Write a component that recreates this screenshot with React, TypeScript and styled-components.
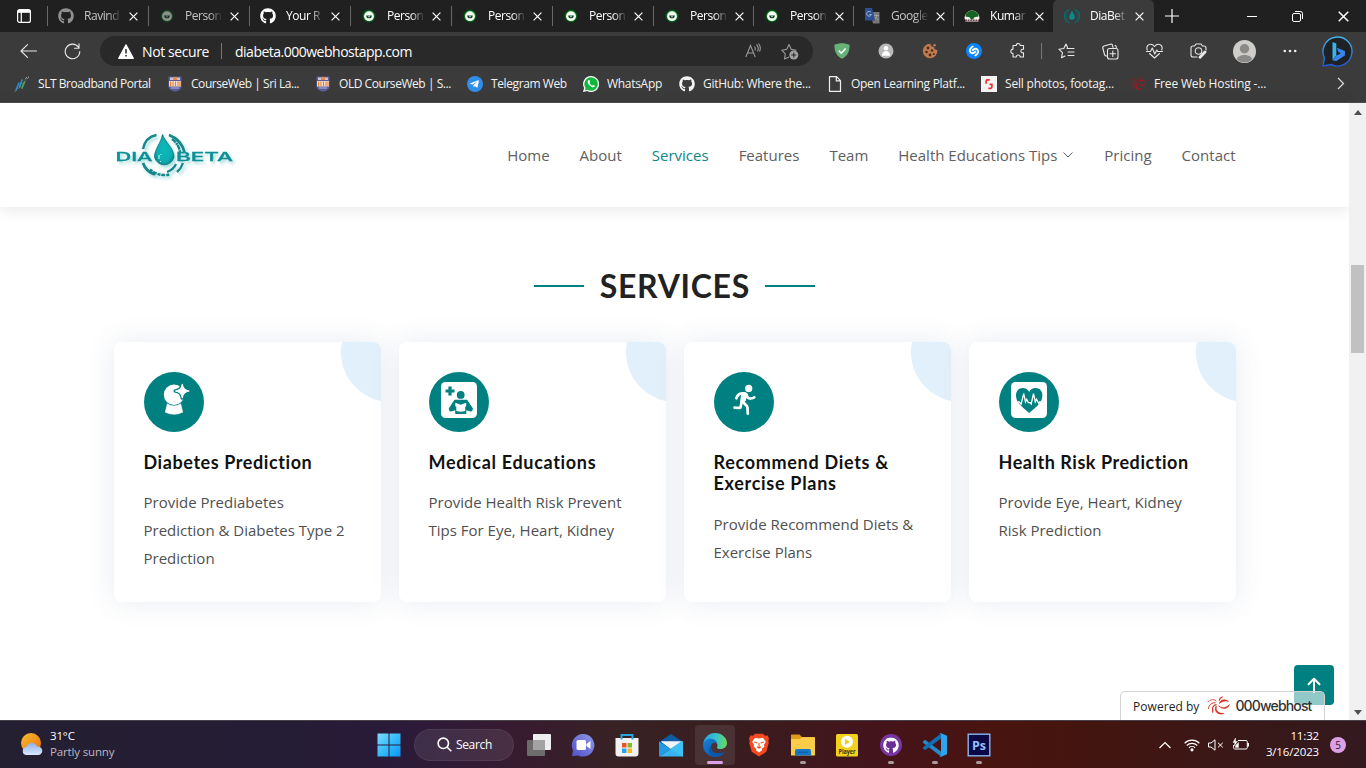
import React from "react";
import styled, { createGlobalStyle } from "styled-components";
import { FaGithub, FaTelegramPlane } from "react-icons/fa";
import { SiShazam } from "react-icons/si";

const ui = `"Open Sans", "Noto Sans", sans-serif`;
const teal = "#008080";

const GlobalStyle = createGlobalStyle`
  * { box-sizing: border-box; }
  body { margin: 0; background: #fff; overflow: hidden; font-family: ${ui}; }
  svg { display: block; flex: none; }
  h2, h4, p { margin: 0; }
`;

const Screen = styled.div`
  width: 1366px;
  height: 768px;
  display: flex;
  flex-direction: column;
  overflow: hidden;
`;

/* ---------- Browser: tab strip ---------- */

const TabStrip = styled.div`
  display: flex;
  height: 32px;
  flex: none;
  background: #202020;
  color: #fff;
`;

const WorkspaceButton = styled.div`
  width: 47px;
  padding: 9px 0 0 17px;
`;

const Tab = styled.div<{ $w: number; $active?: boolean; $dim?: boolean }>`
  width: ${(p) => p.$w}px;
  height: 32px;
  display: flex;
  align-items: center;
  padding-left: 11px;
  position: relative;
  border-radius: 5px 5px 0 0;
  background: ${(p) => (p.$active ? "#3b3b3b" : "transparent")};
  &::before {
    content: "";
    position: absolute;
    left: 0;
    top: 6px;
    width: 1px;
    height: 20px;
    background: ${(p) => (p.$active ? "transparent" : "#686868")};
  }
  > svg:first-child { opacity: ${(p) => (p.$dim ? 0.5 : 1)}; }
`;

const TabTitle = styled.span<{ $dim?: boolean }>`
  width: 37px;
  margin-left: 10px;
  white-space: nowrap;
  font-size: 12px;
  line-height: 18px;
  letter-spacing: -0.45px;
  color: ${(p) => (p.$dim ? "#c4c4c4" : "#fff")};
  -webkit-mask-image: linear-gradient(90deg, #000 65%, transparent 102%);
  mask-image: linear-gradient(90deg, #000 65%, transparent 102%);
`;

const TabClose = styled.span`
  margin-left: 8px;
`;

const WindowButtons = styled.div`
  flex: 1;
  display: flex;
  justify-content: space-between;
  align-items: center;
  padding: 0 17px 0 11px;
`;

const CaptionButtons = styled.div`
  display: flex;
  gap: 35px;
  align-items: center;
`;

/* ---------- Browser: toolbar ---------- */

const Toolbar = styled.div`
  display: flex;
  align-items: center;
  height: 38px;
  flex: none;
  background: #3b3b3b;
  color: #eee;
`;

const NavButton = styled.div`
  width: 44px;
  height: 30px;
  display: flex;
  align-items: center;
  justify-content: center;
`;

const NavGroup = styled.div`
  display: flex;
  width: 100px;
  padding-left: 6px;
`;

const AddressBar = styled.div`
  width: 713px;
  height: 30px;
  border-radius: 15px;
  background: #292929;
  display: flex;
  align-items: center;
  padding: 0 14px 0 18px;
  font-size: 14px;
  color: #fff;
`;

const Security = styled.span`
  width: 79px;
  margin-left: 8px;
  letter-spacing: -0.4px;
  white-space: nowrap;
`;

const Url = styled.span`
  flex: 1;
  margin-left: 13px;
  letter-spacing: -0.5px;
`;

const Rule = styled.span`
  width: 1px;
  height: 16px;
  background: #777;
`;

const AddressIcons = styled.div`
  display: flex;
  gap: 20px;
`;

const Extensions = styled.div`
  display: flex;
  align-items: center;
  margin-left: 7px;
`;

const ToolGap = styled.span<{ $w: number }>`
  width: ${(p) => p.$w}px;
`;

const Bookmarks = styled.div`
  height: 33px;
  flex: none;
  display: flex;
  align-items: center;
  padding: 0 0 5px 14px;
  background: #3b3b3b;
  border-bottom: 1px solid #4c4c4c;
  color: #f3f3f3;
  font-size: 12px;
`;

const Bookmark = styled.div<{ $w: number; $track: number }>`
  width: ${(p) => p.$w}px;
  flex: none;
  display: flex;
  align-items: center;
  gap: 8px;
  white-space: nowrap;
  letter-spacing: ${(p) => p.$track}px;
`;

/* ---------- Web page ---------- */

const Viewport = styled.div`
  flex: 1;
  display: flex;
  min-height: 0;
  position: relative;
`;

const Page = styled.div`
  width: 1349px;
  background: #fff;
`;

const SiteHeader = styled.header`
  height: 104px;
  display: flex;
  align-items: center;
  justify-content: space-between;
  padding: 0 113.5px 0 110px;
  background: #fff;
  box-shadow: 0 2px 15px rgba(0, 0, 0, 0.1);
`;

const Menu = styled.nav`
  display: flex;
  gap: 30px;
`;

const MenuItem = styled.a<{ $active?: boolean }>`
  display: flex;
  align-items: center;
  gap: 5px;
  font-size: 15px;
  line-height: 20px;
  white-space: nowrap;
  color: ${(p) => (p.$active ? "#0d8787" : "#606060")};
`;

const Services = styled.section`
  padding: 60px 113.5px 0;
`;

const Heading = styled.div`
  display: flex;
  align-items: center;
  justify-content: center;
  gap: 15px;
  height: 38px;
  margin-bottom: 37px;
  &::before, &::after {
    content: "";
    width: 50px;
    height: 2px;
    background: ${teal};
  }
  h2 {
    width: 151px;
    text-align: center;
    font: 700 32px/38px Lato, sans-serif;
    letter-spacing: 0.7px;
    text-indent: 0.7px;
    color: #222;
    white-space: nowrap;
  }
`;

const CardGrid = styled.div`
  display: grid;
  grid-template-columns: repeat(4, 267px);
  gap: 18px;
`;

const Card = styled.article`
  height: 260px;
  padding: 30px 20px 30px 30px;
  position: relative;
  overflow: hidden;
  border-radius: 8px;
  background: #fff;
  box-shadow: 0 0 29px 0 rgba(68, 88, 144, 0.12);
  &::before {
    content: "";
    position: absolute;
    right: -60px;
    top: -40px;
    width: 100px;
    height: 100px;
    border-radius: 50%;
    background: #e1f0fa;
  }
`;

const CardIcon = styled.div`
  width: 60px;
  height: 60px;
  border-radius: 50%;
  display: flex;
  align-items: center;
  justify-content: center;
  margin-bottom: 19.6px;
  background: ${teal};
  color: #fff;
`;

const CardTitle = styled.h4<{ $track: number }>`
  font: 700 18px/21.6px Lato, sans-serif;
  letter-spacing: ${(p) => p.$track}px;
  margin-bottom: 15px;
  white-space: pre-line;
  color: #111;
`;

const CardText = styled.p`
  font-size: 15px;
  line-height: 28px;
  white-space: pre-line;
  color: #505050;
`;

const Scrollbar = styled.div`
  width: 17px;
  background: #f1f1f1;
  display: flex;
  flex-direction: column;
  align-items: center;
  padding: 7px 0 5px;
`;

const Thumb = styled.div`
  width: 13px;
  height: 88px;
  margin: 150px 0 auto;
  background: #c1c1c1;
`;

const BackToTop = styled.div`
  position: absolute;
  right: 32px;
  bottom: 15px;
  width: 40px;
  height: 40px;
  border-radius: 4px;
  background: ${teal};
  display: flex;
  align-items: center;
  justify-content: center;
`;

const HostBadge = styled.div`
  position: absolute;
  left: 1120px;
  bottom: 0;
  width: 205px;
  height: 29px;
  border: 1px solid #d3d3d3;
  border-bottom: 0;
  border-radius: 5px 5px 0 0;
  background: rgba(255, 255, 255, 0.57);
  display: flex;
  align-items: center;
  padding-left: 12px;
  font-size: 12px;
  letter-spacing: 0.05px;
  color: #222;
  svg { margin: 0 5px 0 8px; }
`;

const HostName = styled.span`
  font: 500 14px/20px Inter, sans-serif;
  letter-spacing: -0.85px;
  color: #333;
`;

/* ---------- Taskbar ---------- */

const Taskbar = styled.footer`
  height: 48px;
  flex: none;
  display: flex;
  align-items: center;
  border-top: 1px solid #48414a;
  background: linear-gradient(90deg, #251f32 0%, #241d35 21%, #2b1a3a 29%, #371b30 38%, #372224 45%, #3a1c1f 55%, #44141b 64%, #49140f 73%, #431510 80%, #381818 92%, #33191f 100%);
  color: #fff;
`;

const Weather = styled.div`
  width: 367px;
  display: flex;
  align-items: center;
  gap: 7px;
  padding-left: 20px;
  padding-bottom: 1px;
  font-size: 11.5px;
  line-height: 16px;
  letter-spacing: -0.15px;
`;

const Muted = styled.div`
  color: #bdb9c1;
`;

const TaskButton = styled.div<{ $active?: boolean; $running?: boolean }>`
  width: 40px;
  height: 40px;
  margin: 0 2px;
  flex: none;
  border-radius: 4px;
  display: flex;
  align-items: center;
  justify-content: center;
  position: relative;
  background: ${(p) => (p.$active ? "rgba(255,255,255,0.09)" : "transparent")};
  &::after {
    content: "";
    display: ${(p) => (p.$active || p.$running ? "block" : "none")};
    position: absolute;
    bottom: 1px;
    left: ${(p) => (p.$active ? 12 : 17)}px;
    width: ${(p) => (p.$active ? 16 : 6)}px;
    height: 3px;
    border-radius: 2px;
    background: ${(p) => (p.$active ? "#dda0e6" : "#a99a9d")};
  }
`;

const SearchPill = styled.div`
  width: 100px;
  height: 32px;
  margin: 0 3px;
  border-radius: 16px;
  border: 1px solid rgba(255, 255, 255, 0.06);
  background: rgba(255, 255, 255, 0.09);
  display: flex;
  align-items: center;
  padding-left: 22px;
  gap: 4px;
  font-size: 12px;
  letter-spacing: -0.35px;
`;

const Tray = styled.div`
  margin-left: auto;
  display: flex;
  align-items: center;
  padding-right: 20px;
`;

const TrayIcons = styled.div`
  display: flex;
  align-items: center;
  gap: 8px;
  > svg:first-child { margin-right: 5px; }
`;

const Clock = styled.div`
  width: 70px;
  padding-bottom: 1px;
  text-align: right;
  font-size: 11.5px;
  line-height: 16px;
  letter-spacing: -0.15px;
`;

const Count = styled.span`
  width: 16px;
  height: 16px;
  margin-left: 11px;
  border-radius: 50%;
  background: #dda0e6;
  color: #222;
  font-size: 10px;
  line-height: 16px;
  text-align: center;
`;

/* ---------- Drawings ---------- */

const FaceIcon = () => (
  <svg width="16" height="16" viewBox="0 0 16 16">
    <circle cx="8" cy="8" r="7" fill="#0b3a12" />
    <circle cx="8" cy="8" r="5.800" fill="#177a2c" />
    <circle cx="8" cy="8.200" r="4.900" fill="#f4fff4" />
    <path d="M5.200 7.500h5.600c0 2-1.200 2.800-2.800 2.800s-2.800-.8-2.800-2.800z" fill="#143a24" />
    <circle cx="8" cy="8.400" r=".9" fill="#9fd8b0" />
  </svg>
);

const TranslateIcon = () => (
  <svg width="17" height="16" viewBox="0 0 17 16">
    <path d="M6 4h9.500v11.500H9z" fill="#777" />
    <path d="M10 7.500h5M12.500 6.500v1.500c-.5 2-1.500 3-2.500 4M11.500 9c1 1.500 2 2.500 3 3" stroke="#aaa" strokeWidth=".8" fill="none" />
    <path d="M1 0h7l3 12.500H1z" fill="#2f4f93" />
    <path d="M7 4.300a2.400 2.400 0 1 0 .4 2.200H5.300" stroke="#a8b8d8" strokeWidth=".9" fill="none" />
  </svg>
);

const TreeIcon = () => (
  <svg width="16" height="16" viewBox="0 0 16 16">
    <path d="M.5 10a7.500 7.500 0 0 1 15 0l-1 3.500h-13z" fill="#f4f4f4" />
    <path d="M1.500 8.500C1 6 3.500 2.800 8 2.800S15 6 14.500 8.500l-4 .7-1.500 2.300H7L5.500 9.200z" fill="#146322" />
    <path d="M1 12.200h14" stroke="#744" strokeWidth="1.500" strokeDasharray="2 .6" />
  </svg>
);

const DropIcon = () => (
  <svg width="16" height="16" viewBox="0 0 16 16" fill="none">
    <path d="M8 2.500c1.300 3 2.800 4.500 2.800 6.500a2.800 2.800 0 0 1-5.600 0C5.200 7 6.700 5.500 8 2.500z" fill="#0b8c8c" />
    <path d="M5.500 1.300a7 7 0 0 0 0 13.400M10.500 1.300a7 7 0 0 1 0 13.400" stroke="#0b6c70" strokeWidth="1.300" />
    <path d="M4.500 4a5 5 0 0 0 0 8M11.500 4a5 5 0 0 1 0 8" stroke="#0b6c70" strokeWidth=".8" />
  </svg>
);

const CloseIcon = ({ size = 9 }: { size?: number }) => (
  <svg width={size} height={size} viewBox="0 0 9 9">
    <path d="M.6.6l7.800 7.800M8.400.6L.6 8.400" stroke="#fff" strokeWidth="1.200" />
  </svg>
);

const SltIcon = () => (
  <svg width="16" height="16" viewBox="0 0 16 16" fill="none" strokeLinecap="round">
    <path d="M2 14l3-7M5.500 11.500L8 4" stroke="#2b8fcc" strokeWidth="1.600" />
    <path d="M8 12l2.500-6" stroke="#46a84a" strokeWidth="1.800" />
    <path d="M1 15.500L15 1" stroke="#999" strokeWidth=".7" strokeDasharray="1 2.500" />
    <path d="M11.500 3l1-1.500M14.500 1v.5" stroke="#aaa" />
  </svg>
);

const CrestIcon = () => (
  <svg width="16" height="16" viewBox="0 0 16 16">
    <path d="M1.500.5h13v10c0 3-3 4.200-6.500 5.200C4.500 14.700 1.500 13.500 1.500 10.500z" fill="#5c5c9c" />
    <path d="M3 1.500h10v2.500H3z" fill="#c9c4dc" />
    <path d="M6 1h4v3H6z" fill="#e2894c" />
    <path d="M2 5h12v5.500H2z" fill="#f3dcc8" />
    <path d="M3.500 5.500v4.500M6 5.500v4.500M8.500 5.500v4.500M11 5.500v4.500M13 5.500v4.500" stroke="#e37b35" />
    <path d="M4 12h8" stroke="#b9b5d4" />
  </svg>
);

const TelegramIcon = () => (
  <svg width="16" height="16" viewBox="0 0 16 16">
    <circle cx="8" cy="8" r="8" fill="#2f8fe8" />
    <g transform="translate(2.500 3)"><FaTelegramPlane size={10} color="#fff" /></g>
  </svg>
);

const WhatsAppIcon = () => (
  <svg width="16" height="16" viewBox="0 0 16 16">
    <path d="M8 0a8 8 0 1 1-3.800 15L0 16l1.100-4A8 8 0 0 1 8 0z" fill="#fff" />
    <path d="M8 1.200a6.800 6.800 0 1 1-3.500 12.600l-2.600.6.700-2.500A6.800 6.800 0 0 1 8 1.200z" fill="#12b83e" />
    <path d="M5.500 4c-1.500 1.300-.7 3.500 1 5.300s4 2.900 5.400 1.300c.4-.6.200-.9-1.700-1.700-.8.900-.9.900-1.900.3S6.700 7.700 6.500 7.100c.8-.8.700-1.100.1-2.600C6.400 4 6 3.900 5.500 4z" fill="#fff" />
  </svg>
);

const DocIcon = () => (
  <svg width="16" height="16" viewBox="0 0 16 16">
    <path d="M2.500.7h7l4 4v10.600h-11zM9.300.7v4.200h4.200" fill="none" stroke="#eee" strokeWidth="1.200" />
  </svg>
);

const StockIcon = () => (
  <svg width="16" height="16" viewBox="0 0 16 16">
    <path d="M0 0h16v16H0z" fill="#f4f4f4" />
    <path d="M8.800 3.800H6.400c-.8 0-1.300.5-1.300 1.200v2.800M7.300 12.300h2.300c.8 0 1.300-.5 1.300-1.200V8.300H8.500" fill="none" stroke="#ee3030" strokeWidth="1.700" />
  </svg>
);

const SwirlIcon = ({ width = 16, color = "#b51517" }: { width?: number; color?: string }) => (
  <svg width={width} height={(width * 20) / 24} viewBox="0 0 24 20" fill="none" stroke={color} strokeLinecap="round">
    <path d="M13 7.500c1-3.500 5-5 9.500-1.800-4.500-1.300-7 .3-9.500 1.800z" fill={color} strokeWidth=".6" />
    <path d="M12.500 10.500c2.500 2.500 7 2.500 11-1.500-1.500 4.500-7 5.500-11 1.500z" fill={color} strokeWidth=".6" />
    <path d="M9.500 11c-1 4.500 2.500 7.500 8 7.300-5.500 1.800-10.500-1.500-8-7.300z" fill={color} strokeWidth=".8" />
    <path d="M9.500 9c-3 .5-4.500 3.500-3.500 8" strokeWidth="1.200" />
    <path d="M8.500 7C5 7 2 9 1.500 13" strokeWidth="1" strokeDasharray="3 1" />
    <path d="M9.500 5C7 3 4 3.500 1 6" strokeWidth=".8" strokeDasharray="3 1" />
    <path d="M13 4.500c0-2 1.500-3 3-3.500" strokeWidth="1.100" />
  </svg>
);

const BallIcon = () => (
  <svg width="60" height="60" viewBox="0 0 60 60">
    <circle cx="30" cy="22.700" r="10.200" fill="#fff" />
    <path d="M38.300 12q.6 6.400 7 7-6.400.6-7 7-.6-6.400-7-7 6.400-.6 7-7z" fill="#fff" stroke={teal} strokeWidth="3.600" strokeLinejoin="round" paintOrder="stroke" />
    <path d="M38.300 12.300q.8 5.900 6.700 6.700-5.900.8-6.700 6.700-.8-5.900-6.700-6.700 5.900-.8 6.700-6.700z" fill="#fff" stroke="#fff" strokeWidth="1.200" strokeLinejoin="round" />
    <path d="M23.300 31.800q6.700 4.400 13.400 0l2 8.400q-8.700 4.200-17.400 0z" fill="#fff" stroke="#fff" strokeWidth=".6" strokeLinejoin="round" />
  </svg>
);

const RunnerIcon = () => (
  <svg width="60" height="60" viewBox="0 0 60 60" fill="none" stroke="#fff" strokeWidth="2.700" strokeLinecap="round" strokeLinejoin="round">
    <circle cx="34.700" cy="16.400" r="3.600" fill="#fff" stroke="none" />
    <path d="M22.400 26.300c.7-2.800 2.300-4.600 5.800-4.900" />
    <path d="M27.500 20.500c2-1 5-.6 6 1.200L31.700 29l-4 2.500c-1.600-1.500-1.700-2.500-1.300-4z" fill="#fff" stroke="none" />
    <path d="M32.500 22.500c.5 3.500 3 5.300 7.800 2.900" />
    <path d="M27.800 29.500l-1.300 5.700c-.1.600-.4.800-1 .8l-5-.4" />
    <path d="M28.800 29.800l3.800 4c.6.600.8 1.200.9 2l.3 5.800" />
  </svg>
);

const EducationIcon = () => (
  <svg width="36" height="40" viewBox="0 0 36 40">
    <rect width="36" height="36" rx="4.500" fill="#fff" />
    <path d="M9 4.500v9M4.500 9h9" stroke={teal} strokeWidth="3.200" />
    <circle cx="19.700" cy="12.900" r="3.900" fill={teal} />
    <path d="M13.500 17.800h12.600l5.700 8.400c.6 1.400-.9 3.600-2.400 3.200l-4.100-1.200V32H14.200v-3.800l-4 1.200c-1.500.4-2.900-1.800-2.300-3.200z" fill={teal} />
    <path d="M14.300 20.800l5.400 2 5.500-2v3.500l-1 .4v4.200l-4.500.9-4.400-.9v-4.200l-1-.4z" fill="#fff" />
  </svg>
);

const HeartIcon = () => (
  <svg width="36" height="40" viewBox="0 0 36 40">
    <rect width="36" height="36" rx="4.500" fill="#fff" />
    <path d="M18.200 31C12 25.500 5 21.500 5 13.300 5 8.800 8 6 11.700 6c3 0 5.300 1.600 6.500 4 1.200-2.400 3.500-4 6.500-4 3.700 0 6.700 2.800 6.700 7.300 0 8.200-7 12.200-13.200 17.700z" fill={teal} />
    <path d="M6.500 20h1.800l1.700 2.300 2.700-10.600 1.800 8.300 1.200-2.700 1.700 3.400h1.800l1 1.300 2.300-10.300 1.800 8.300 1.200-2.700 2.200 4 1-1.500h2" fill="none" stroke="#fff" strokeWidth="1.300" />
  </svg>
);

const Logo = () => (
  <svg width="130" height="62" viewBox="0 -2 130 62">
    <defs>
      <filter id="soft" x="-10%" y="-10%" width="130%" height="130%">
        <feDropShadow dx="2" dy="2.500" stdDeviation="1.800" floodColor="#2aa" floodOpacity=".4" />
      </filter>
      <radialGradient id="drop" cx=".5" cy=".5" r=".6">
        <stop offset="0" stopColor="#0cb9ba" />
        <stop offset=".65" stopColor="#08aeb0" />
        <stop offset="1" stopColor="#087880" />
      </radialGradient>
    </defs>
    <g filter="url(#soft)" fill="none" stroke="#16878c">
      <path d="M33 23C34.500 15 39 10.500 46.500 9" strokeWidth="2.400" />
      <path d="M59 9c8 3 13 8 15.500 17" strokeWidth="2.600" />
      <path d="M62 13c5 3.500 7 8 8 13" strokeWidth="2.400" strokeDasharray="5 .7 2 .5" />
      <path d="M33 37c2 6 6 9.500 12 11.500" strokeWidth="2.800" />
      <path d="M40 43.500c5 4.500 12 6.500 20 5" strokeWidth="2.600" strokeDasharray="3 .8 4 1" />
      <path d="M73 37c-1.500 4.500-3.500 7-6 9M66 38c-2 4.500-5 6.500-9 8" strokeWidth="2.300" />
      <path d="M52.500 8.500C55 16 64 22 64 31a10 10 0 0 1-19.500 0C44.500 23 51 17 52.500 8.500z" fill="url(#drop)" stroke="#0a7078" strokeWidth=".8" />
      <path d="M49 29v4M51 28v1M50 35l1 1" stroke="#bff" />
      <g fill="#0d8f96" stroke="#0d8f96" strokeWidth=".3" fontFamily="Inter, sans-serif" fontWeight="500" fontSize="11.800">
        <text x="5.500" y="34.800" textLength="37" lengthAdjust="spacingAndGlyphs">DIA</text>
        <text x="66" y="34.800" textLength="57" lengthAdjust="spacingAndGlyphs">BETA</text>
      </g>
    </g>
  </svg>
);

const lineProps = { fill: "none", stroke: "#e8e8e8", strokeWidth: 1.1, strokeLinecap: "round", strokeLinejoin: "round" } as const;

const ShieldIcon = () => (
  <svg width="16" height="16" viewBox="0 0 16 16">
    <path d="M8 .3c2.500 0 5.500.6 7.600 1.500 0 7-2 11.200-7.600 14C2.400 13 .4 8.800.4 1.800 2.500.9 5.500.3 8 .3z" fill="#67b279" />
    <path d="M4.800 7.600l2.500 2.600 4.300-4.700" fill="none" stroke="#fff" strokeWidth="1.600" />
  </svg>
);

const PersonDisc = () => (
  <svg width="16" height="16" viewBox="0 0 16 16">
    <circle cx="8" cy="8" r="7.500" fill="#b9b9b9" />
    <circle cx="8" cy="5.300" r="2.200" fill="#fff" />
    <path d="M3.800 12.800c0-6.500 8.400-6.500 8.400 0z" fill="#fff" />
  </svg>
);

const CookieIcon = () => (
  <svg width="16" height="16" viewBox="0 0 16 16">
    <path d="M8.500.7A3 3 0 0 0 12 4c0 2 1.500 3 3.300 3A7.300 7.300 0 1 1 8.500.7z" fill="#bf7b50" />
    <circle cx="12.500" cy="2.300" r="1.300" fill="#bf7b50" />
    <g fill="#4d2c1c"><circle cx="6" cy="5" r="1.400" /><circle cx="10" cy="7.500" r="1.300" /><circle cx="4.500" cy="9" r="1.300" /><circle cx="8" cy="12" r="1.400" /><circle cx="11.800" cy="11" r="1" /></g>
  </svg>
);

const ShazamIcon = () => (
  <svg width="16" height="16" viewBox="0 0 16 16">
    <circle cx="8" cy="8" r="6" fill="#fff" />
    <SiShazam size={16} color="#0a84ff" />
  </svg>
);

const PuzzleIcon = () => (
  <svg width="16" height="16" viewBox="0 0 16 16" {...lineProps}>
    <path d="M3 2.500h3.200a2 2 0 0 1 4 0h3.300v3.800h-.8a1.800 1.800 0 0 0 0 3.600h.8V14h-3.300a2 2 0 0 0-4 0H3v-3.500a2.200 2.200 0 0 1 0-4.400z" />
  </svg>
);

const FavoritesIcon = () => (
  <svg width="17" height="16" viewBox="0 0 17 16" {...lineProps}>
    <path d="M9.500 4.500L8 1 5.800 5.500l-5 .7 3.700 3.500-1 5L7 13M9 5.500h7M10 9h6M10 12.500h6" />
  </svg>
);

const CollectionsIcon = () => (
  <svg width="17" height="17" viewBox="0 0 17 17" {...lineProps}>
    <path d="M5.500 13H4.300c-1 0-1.500-.5-1.800-1.500L.8 5c-.2-1 .3-1.700 1.200-2l6.500-1.800c1-.3 1.800.2 2 1.200l.5 2" />
    <path d="M13 2.500c1 .2 1.500 1 1.200 2" />
    <rect x="5.500" y="5.500" width="10.500" height="10.500" rx="2" />
    <path d="M10.800 8v5.500M8 10.800h5.500" />
  </svg>
);

const EssentialsIcon = () => (
  <svg width="17" height="16" viewBox="0 0 17 16" {...lineProps}>
    <path d="M1.300 7C0 3.500 2 1.300 4.500 1.300c1.800 0 3 .9 4 2.200 1-1.300 2.200-2.200 4-2.200C15 1.300 17 3.500 15.700 7M3.500 10.500l5 4.500 5-4.500M.5 8.500h4L6.300 5l2.500 6 2-4 .9 1.500h4.800" />
  </svg>
);

const CaptureIcon = () => (
  <svg width="17" height="16" viewBox="0 0 17 16" {...lineProps}>
    <path d="M7 14H3a2 2 0 0 1-2-2V5a2 2 0 0 1 2-2h1.500L6 1h5l1.500 2H14a2 2 0 0 1 2 2v2" />
    <circle cx="8.500" cy="8" r="3.300" />
    <path d="M15 9l-5 5.200" strokeWidth="2.800" />
  </svg>
);

const AvatarIcon = () => (
  <svg width="23" height="23" viewBox="0 0 23 23">
    <circle cx="11.500" cy="11.500" r="11.500" fill="#cfcdca" />
    <circle cx="11.500" cy="8.700" r="4.700" fill="#8c8a88" />
    <path d="M4 19.500c0-6 15-6 15 0-4 4-11 4-15 0z" fill="#8c8a88" />
  </svg>
);

const BingIcon = () => (
  <svg width="31" height="31" viewBox="0 0 31 31">
    <defs>
      <linearGradient id="bing" x1="0" y1="0" x2="0" y2="1">
        <stop offset="0" stopColor="#3fb6e8" />
        <stop offset="1" stopColor="#2058d8" />
      </linearGradient>
    </defs>
    <path d="M1 30l1.500-8A14.500 14.500 0 1 1 9 28.500z" fill="#202124" stroke="url(#bing)" strokeWidth="1.400" strokeLinejoin="round" />
    <path d="M10.500 6l3.800 1.500v12l-3.800 4.500z" fill="#38b4ee" />
    <path d="M10.500 24.500l4-5 4.500-2.200-2.600-1.200-1.500-4.400 8 3.300v4.600l-8.500 5.500z" fill="#3787ee" />
  </svg>
);

const ChevronIcon = ({ w, h, color, d, weight = 1.2 }: { w: number; h: number; color: string; d: string; weight?: number }) => (
  <svg width={w} height={h} viewBox={`0 0 ${w} ${h}`} fill="none" stroke={color} strokeWidth={weight}><path d={d} /></svg>
);

const WeatherIcon = () => (
  <svg width="23" height="24" viewBox="0 0 23 24">
    <defs>
      <linearGradient id="sun" x1="0" y1="0" x2="1" y2="1"><stop offset="0" stopColor="#f3c02d" /><stop offset="1" stopColor="#ef6c10" /></linearGradient>
      <linearGradient id="cloud" x1="0" y1="0" x2="0" y2="1"><stop offset="0" stopColor="#8cb0ee" /><stop offset="1" stopColor="#dce9fb" /></linearGradient>
    </defs>
    <circle cx="11" cy="11" r="10" fill="url(#sun)" />
    <path d="M7 23a4 4 0 0 1-.5-8 5.500 5.500 0 0 1 10.500-.3A4.200 4.200 0 0 1 19 23z" fill="url(#cloud)" />
  </svg>
);

const StartIcon = () => (
  <svg width="24" height="24" viewBox="0 0 24 24">
    <defs><linearGradient id="win" gradientUnits="userSpaceOnUse" x1="0" y1="0" x2="24" y2="24"><stop offset="0" stopColor="#82dcfb" /><stop offset=".5" stopColor="#35bcf9" /><stop offset="1" stopColor="#0793f8" /></linearGradient></defs>
    <path d="M.5.500h11v11H.5zM12.500.500h11v11h-11zM.5 12.500h11v11H.5zM12.500 12.500h11v11h-11z" fill="url(#win)" />
  </svg>
);

const TaskViewIcon = () => (
  <svg width="24" height="22" viewBox="0 0 24 22">
    <rect x="6" width="18" height="16" rx="1" fill="#eee" />
    <rect y="6" width="18" height="16" rx="1" fill="#6d6b6b" />
    <path d="M6 6h12v10H6z" fill="#a4a2a2" />
  </svg>
);

const ChatIcon = () => (
  <svg width="24" height="24" viewBox="0 0 24 24">
    <defs><linearGradient id="chat" x1="0" y1="1" x2="1" y2="0"><stop offset="0" stopColor="#4f4fc9" /><stop offset="1" stopColor="#8f9ae6" /></linearGradient></defs>
    <path d="M12 1a11.300 11.300 0 1 1-5 21.400L1 23.300l1-5.800A11.300 11.300 0 0 1 12 1z" fill="url(#chat)" />
    <rect x="5.500" y="7" width="9.500" height="10" rx="1.500" fill="#fff" />
    <path d="M15.500 11l4-3v8l-4-3z" fill="#fff" />
  </svg>
);

const StoreIcon = () => (
  <svg width="24" height="24" viewBox="0 0 24 24">
    <path d="M.5 5h23v15.500a3 3 0 0 1-3 3h-17a3 3 0 0 1-3-3z" fill="#f3f1f1" />
    <path d="M6.500 6.500V2h11v4.500" fill="none" stroke="#27a7e2" strokeWidth="2" />
    <path d="M7 10h4.500v4.500H7z" fill="#f0512a" /><path d="M12.500 10H17v4.500h-4.500z" fill="#7fbb27" /><path d="M7 15.500h4.500V20H7z" fill="#2aa3ef" /><path d="M12.500 15.500H17V20h-4.500z" fill="#fcb813" />
  </svg>
);

const MailIcon = () => (
  <svg width="24" height="24" viewBox="0 0 24 24">
    <path d="M0 9L12 1l12 8v6H0z" fill="#0c5ba5" />
    <path d="M2 8.500h20L12 16z" fill="#f2f5f8" />
    <path d="M0 8.500l12 7.500L0 23.500z" fill="#1f9ce4" />
    <path d="M24 8.500V23.500H0z" fill="#36b5f0" />
    <path d="M24 8.500L12 16 2 8.500z" fill="#f2f5f8" />
    <path d="M24 8.500h-2L11 16l13 7.500z" fill="#3fc0f4" />
  </svg>
);

const EdgeIcon = () => (
  <svg width="24" height="24" viewBox="0 0 24 24">
    <defs>
      <linearGradient id="edgeTop" x1="0" y1=".4" x2="1" y2=".5"><stop offset="0" stopColor="#2a9ee0" /><stop offset=".5" stopColor="#34c3cf" /><stop offset="1" stopColor="#67d95b" /></linearGradient>
      <linearGradient id="edgeLow" x1="0" y1="0" x2="1" y2="1"><stop offset="0" stopColor="#1681d6" /><stop offset="1" stopColor="#0c4da0" /></linearGradient>
    </defs>
    <path d="M.2 11C.8 4.500 6 0 12 0c7 0 12 5 12 10 0 3.800-3 6-6.500 6-2.800 0-3.800-1-3.500-1.800.8-1 1.300-5.200-4-5.700C5 8 .5 9.500.2 11z" fill="url(#edgeTop)" />
    <path d="M.1 12C.5 8.300 4 5.500 8 5.700c3 .1 6 2 6 4.800-1.800-2-5.500-.8-6 3-.5 5 5 9.500 13.500 5.800C19 22.500 15.500 24 12 24 5.500 24-.2 18.500.1 12z" fill="url(#edgeLow)" />
    <path d="M8 13c-.5 5.500 5.500 9.500 13.800 5.900C19 23 14 24.800 10 23.500 5.500 21 5 15.500 8 13z" fill="#0d57ab" />
  </svg>
);

const BraveIcon = () => (
  <svg width="24" height="24" viewBox="0 0 24 24">
    <path d="M8 .8h8l2 2 2.700-.3 1.300 3.300-.7 2 .5 2-2.500 9L12 23.600 4.700 18.800l-2.500-9 .5-2-.7-2 1.300-3.300L6 2.800z" fill="#f4481e" />
    <path d="M12 5.500l4-.7 2.800 4-1.800 3 .3 2-2.500 2 .3 1.500L12 19.500l-3.100-2.200.3-1.500-2.500-2 .3-2-1.800-3 2.800-4z" fill="#fff" />
    <path d="M7.300 9l3 1M16.700 9l-3 1M12 10v4.500M10 13.800l2 1.200 2-1.200" stroke="#f4481e" strokeWidth="1.100" fill="none" />
  </svg>
);

const FolderIcon = () => (
  <svg width="24" height="22" viewBox="0 0 24 22">
    <path d="M0 1.500C0 .7.5.500 1 .500h7.500L11 3h12c.6 0 1 .4 1 1v5H0z" fill="#dc9c15" />
    <path d="M0 5h9l2-1.700h12c.6 0 1 .4 1 1V21.500H0z" fill="#fbcb4a" />
    <path d="M4 21.500V17a2 2 0 0 1 2-2h12a2 2 0 0 1 2 2v4.500z" fill="#1477c8" />
    <path d="M7 18.300h10" stroke="#0b5ca5" />
  </svg>
);

const PlayerIcon = () => (
  <svg width="24" height="24" viewBox="0 0 24 24">
    <rect x="1" y="1" width="22" height="22.500" rx="1.500" fill="#f2d21a" />
    <circle cx="12" cy="8.800" r="6" fill="#fff" />
    <path d="M10 5.800l5 3-5 3z" fill="#f0cd12" />
    <text x="12" y="21.300" textAnchor="middle" textLength="17" lengthAdjust="spacingAndGlyphs" fontFamily="Open Sans, sans-serif" fontWeight="700" fontSize="6.500" fill="#3a3010">Player</text>
  </svg>
);

const GithubDesktopIcon = () => (
  <svg width="24" height="24" viewBox="0 0 24 24">
    <circle cx="12" cy="12" r="11" fill="#7a35a5" />
    <circle cx="12" cy="12" r="8.300" fill="#6b2c96" />
    <g transform="translate(4 4.300)"><FaGithub size={16} color="#fff" /></g>
  </svg>
);

const CodeIcon = () => (
  <svg width="24" height="24" viewBox="0 0 24 24">
    <path d="M0 8.500l2-1.700 16 11.800v5L0 9.800z" fill="#2489ca" />
    <path d="M0 15.500l2 1.700L18 5.400V.5L0 14.200z" fill="#0f70b3" />
    <path d="M17.500 0L24 2.800v18.400L17.500 24l-1-.8c.8.300 1.500 0 1.500-1V1.800c0-1-.7-1.300-1.500-1z" fill="#2ba6ee" />
  </svg>
);

const PhotoshopIcon = () => (
  <svg width="24" height="24" viewBox="0 0 24 24">
    <rect x="1.200" y="1.200" width="21.600" height="21.600" fill="#0c0746" stroke="#86b6ee" strokeWidth="1.400" />
    <text x="12" y="16.500" textAnchor="middle" fontFamily="Open Sans, sans-serif" fontSize="12.500" fontWeight="700" fill="#8cc0f8">Ps</text>
  </svg>
);

/* ---------- Data ---------- */

const tabs = [
  { title: "Ravind", icon: <FaGithub size={16} />, width: 101, dim: true },
  { title: "Person", icon: <FaceIcon />, width: 101, dim: true },
  { title: "Your R", icon: <FaGithub size={16} />, width: 101 },
  { title: "Person", icon: <FaceIcon />, width: 101 },
  { title: "Person", icon: <FaceIcon />, width: 101 },
  { title: "Person", icon: <FaceIcon />, width: 101 },
  { title: "Person", icon: <FaceIcon />, width: 100 },
  { title: "Person", icon: <FaceIcon />, width: 100 },
  { title: "Google", icon: <TranslateIcon />, width: 100, faded: true },
  { title: "Kumar", icon: <TreeIcon />, width: 100 },
  { title: "DiaBet", icon: <DropIcon />, width: 101, active: true },
];

const bookmarks = [
  { title: "SLT Broadband Portal", icon: <SltIcon />, width: 153, track: -0.45 },
  { title: "CourseWeb | Sri La...", icon: <CrestIcon />, width: 148, track: -0.45 },
  { title: "OLD CourseWeb | S...", icon: <CrestIcon />, width: 152, track: -0.45 },
  { title: "Telegram Web", icon: <TelegramIcon />, width: 116, track: -0.4 },
  { title: "WhatsApp", icon: <WhatsAppIcon />, width: 96, track: -0.3 },
  { title: "GitHub: Where the...", icon: <FaGithub size={16} />, width: 148, track: -0.3 },
  { title: "Open Learning Platf...", icon: <DocIcon />, width: 154, track: -0.3 },
  { title: "Sell photos, footag...", icon: <StockIcon />, width: 149, track: -0.2 },
  { title: "Free Web Hosting -...", icon: <SwirlIcon />, width: 207, track: -0.15 },
];

const menu = ["Home", "About", "Services", "Features", "Team", "Health Educations Tips", "Pricing", "Contact"];

const services = [
  { title: "Diabetes Prediction", text: "Provide Prediabetes\nPrediction & Diabetes Type 2\nPrediction", icon: <BallIcon />, track: 0.58 },
  { title: "Medical Educations", text: "Provide Health Risk Prevent\nTips For Eye, Heart, Kidney", icon: <EducationIcon />, track: 0.68 },
  { title: "Recommend Diets &\nExercise Plans", text: "Provide Recommend Diets &\nExercise Plans", icon: <RunnerIcon />, track: 0.7 },
  { title: "Health Risk Prediction", text: "Provide Eye, Heart, Kidney\nRisk Prediction", icon: <HeartIcon />, track: 0.54 },
];

const apps = [
  { icon: <TaskViewIcon /> },
  { icon: <ChatIcon /> },
  { icon: <StoreIcon /> },
  { icon: <MailIcon /> },
  { icon: <EdgeIcon />, active: true },
  { icon: <BraveIcon /> },
  { icon: <FolderIcon />, running: true },
  { icon: <PlayerIcon /> },
  { icon: <GithubDesktopIcon />, running: true },
  { icon: <CodeIcon />, running: true },
  { icon: <PhotoshopIcon />, running: true },
];

export default function App() {
  return (
    <Screen>
      <GlobalStyle />
      <TabStrip>
        <WorkspaceButton>
          <svg width="14" height="14" viewBox="0 0 14 14" fill="none" stroke="#fff" strokeWidth="1.200">
            <rect x=".6" y=".6" width="12.800" height="12.800" rx="2" />
            <path d="M1 2.300h12" strokeWidth="3" />
            <path d="M4.300 3v10" />
          </svg>
        </WorkspaceButton>
        {tabs.map((t, i) => (
          <Tab key={i} $w={t.width} $active={t.active} $dim={t.dim}>
            {t.icon}
            <TabTitle $dim={t.dim || t.faded}>{t.title}</TabTitle>
            <TabClose><CloseIcon /></TabClose>
          </Tab>
        ))}
        <WindowButtons>
          <svg width="14" height="14" viewBox="0 0 14 14"><path d="M7 0v14M0 7h14" stroke="#fff" strokeWidth="1.200" /></svg>
          <CaptionButtons>
            <svg width="10" height="10" viewBox="0 0 10 10"><path d="M0 5.500h10" stroke="#fff" /></svg>
            <svg width="11" height="11" viewBox="0 0 11 11" fill="none" stroke="#fff">
              <rect x=".5" y="2.500" width="8" height="8" rx="1.500" />
              <path d="M3 .5h5.500a2 2 0 0 1 2 2V8" />
            </svg>
            <CloseIcon size={11} />
          </CaptionButtons>
        </WindowButtons>
      </TabStrip>

      <Toolbar>
        <NavGroup>
          <NavButton>
            <svg width="17" height="14" viewBox="0 0 17 14" {...lineProps}><path d="M16.500 7H1M7.500.6L1 7l6.500 6.400" /></svg>
          </NavButton>
          <NavButton>
            <svg width="17" height="17" viewBox="0 0 17 17" {...lineProps}><path d="M14.500 4.300A7.300 7.300 0 1 0 15.800 8.500M15 .8v4.500h-4.500" /></svg>
          </NavButton>
        </NavGroup>
        <AddressBar>
          <svg width="16" height="15" viewBox="0 0 16 15">
            <path d="M8 .8L15.300 14.300H.7z" fill="#fff" stroke="#fff" strokeWidth="1.200" strokeLinejoin="round" />
            <path d="M8 5v4.500M8 11v1.600" stroke="#292929" strokeWidth="1.500" />
          </svg>
          <Security>Not secure</Security>
          <Rule />
          <Url>diabeta.000webhostapp.com</Url>
          <AddressIcons>
            <svg width="16" height="16" viewBox="0 0 16 16" fill="none" stroke="#999" strokeWidth="1.100">
              <path d="M.8 14L5.500 2.500 10.200 14M2.400 10h6.200M9.500 3.500c1 1.200 1 2.500.5 4M11.500 1.500c2 2 2 5 1 7M13.500.5c2 2.500 2 6 1 8" />
            </svg>
            <svg width="18" height="17" viewBox="0 0 18 17" fill="none" stroke="#999" strokeWidth="1.100">
              <path d="M8 14l-4.500 2 .8-5.200L.7 7.200l5-.8L8 1.500l2.300 4.900 5 .8" strokeLinejoin="round" />
              <circle cx="12.800" cy="12" r="4.500" fill="#a2a2a2" stroke="none" />
              <path d="M12.800 9.500v5M10.300 12h5" stroke="#292929" />
            </svg>
          </AddressIcons>
        </AddressBar>
        <Extensions>
          <NavButton><ShieldIcon /></NavButton>
          <NavButton><PersonDisc /></NavButton>
          <NavButton><CookieIcon /></NavButton>
          <NavButton><ShazamIcon /></NavButton>
          <NavButton><PuzzleIcon /></NavButton>
          <ToolGap $w={1} />
          <Rule />
          <ToolGap $w={2} />
          <NavButton><FavoritesIcon /></NavButton>
          <NavButton><CollectionsIcon /></NavButton>
          <NavButton><EssentialsIcon /></NavButton>
          <NavButton><CaptureIcon /></NavButton>
          <ToolGap $w={2} />
          <NavButton><AvatarIcon /></NavButton>
          <ToolGap $w={2} />
          <NavButton>
            <svg width="14" height="4" viewBox="0 0 14 4" fill="#eee"><circle cx="1.800" cy="2" r="1.300" /><circle cx="7" cy="2" r="1.300" /><circle cx="12.200" cy="2" r="1.300" /></svg>
          </NavButton>
          <ToolGap $w={3} />
          <NavButton><BingIcon /></NavButton>
        </Extensions>
      </Toolbar>

      <Bookmarks>
        {bookmarks.map((b) => (
          <Bookmark key={b.title} $w={b.width} $track={b.track}>
            {b.icon}
            {b.title}
          </Bookmark>
        ))}
        <ChevronIcon w={8} h={13} color="#ddd" d="M1 1l5.500 5.500L1 12" />
      </Bookmarks>

      <Viewport>
        <Page>
          <SiteHeader>
            <Logo />
            <Menu>
              {menu.map((m) => (
                <MenuItem key={m} $active={m === "Services"}>
                  {m}
                  {m.startsWith("Health") && <ChevronIcon w={12} h={8} color="#606060" weight={1} d="M1.500 1.500L6 6l4.500-4.500" />}
                </MenuItem>
              ))}
            </Menu>
          </SiteHeader>
          <Services>
            <Heading><h2>SERVICES</h2></Heading>
            <CardGrid>
              {services.map((s) => (
                <Card key={s.title}>
                  <CardIcon>{s.icon}</CardIcon>
                  <CardTitle $track={s.track}>{s.title}</CardTitle>
                  <CardText>{s.text}</CardText>
                </Card>
              ))}
            </CardGrid>
          </Services>
        </Page>
        <Scrollbar>
          <svg width="8" height="5" viewBox="0 0 8 5"><path d="M4 0l4 5H0z" fill="#505050" /></svg>
          <Thumb />
          <svg width="8" height="5" viewBox="0 0 8 5"><path d="M0 0h8L4 5z" fill="#505050" /></svg>
        </Scrollbar>
        <BackToTop>
          <svg width="14" height="16" viewBox="0 0 14 16" fill="none" stroke="#fff" strokeWidth="2" strokeLinecap="round" strokeLinejoin="round"><path d="M7 15V2M1.500 7.300L7 1.800l5.500 5.500" /></svg>
        </BackToTop>
        <HostBadge>
          Powered by
          <SwirlIcon width={23} color="#d9261c" />
          <HostName>000webhost</HostName>
        </HostBadge>
      </Viewport>

      <Taskbar>
        <Weather>
          <WeatherIcon />
          <div>
            <div>31°C</div>
            <Muted>Partly sunny</Muted>
          </div>
        </Weather>
        <TaskButton><StartIcon /></TaskButton>
        <SearchPill>
          <svg width="15" height="15" viewBox="0 0 15 15" fill="none" stroke="#fff" strokeWidth="1.600"><circle cx="6.300" cy="6.300" r="5.200" /><path d="M10 10l4.300 4.300" /></svg>
          Search
        </SearchPill>
        {apps.map((a, i) => (
          <TaskButton key={i} $active={a.active} $running={a.running}>{a.icon}</TaskButton>
        ))}
        <Tray>
          <TrayIcons>
            <ChevronIcon w={12} h={8} color="#fff" d="M.5 7L6 1.500 11.500 7" />
            <svg width="16" height="14" viewBox="0 0 16 14" fill="none" stroke="#fff" strokeWidth="1.200">
              <path d="M.6 5.200a10.500 10.500 0 0 1 14.800 0M2.800 7.500a7.400 7.400 0 0 1 10.400 0M5 9.700a4.300 4.300 0 0 1 6 0" />
              <circle cx="8" cy="11.800" r="1" fill="#fff" />
            </svg>
            <svg width="16" height="12" viewBox="0 0 16 12" fill="none" stroke="#fff"><path d="M.5 4h2.500L7 .8v10.400L3 8H.5zM10 3.800l4.800 4.600M14.800 3.800L10 8.400" /></svg>
            <svg width="17" height="13" viewBox="0 0 17 13" fill="none" stroke="#fff"><path d="M6 2.500h8c.8 0 1.300.5 1.300 1.200v6c0 .7-.5 1.300-1.300 1.300H3c-.8 0-1.500-.5-1.500-1.300V7" /><path d="M16.300 5v3.500" strokeWidth="1.300" /><path d="M3.500 0L1 4.500h2L2 8l3.500-4.500h-2zM3.500 9.500v-2l3-3v5z" fill="#fff" strokeWidth=".4" /></svg>
          </TrayIcons>
          <Clock>
            <div>11:32</div>
            <div>3/16/2023</div>
          </Clock>
          <Count>5</Count>
        </Tray>
      </Taskbar>
    </Screen>
  );
}
